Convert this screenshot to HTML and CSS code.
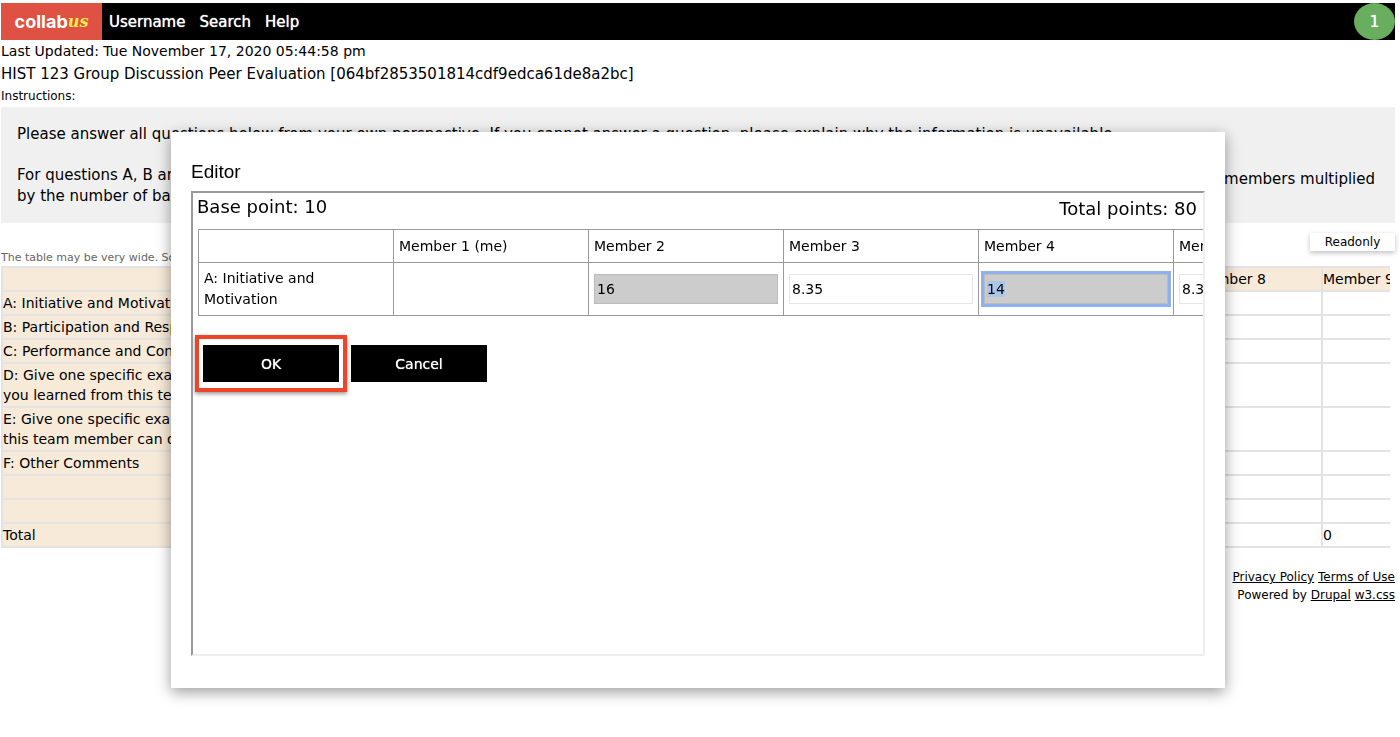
FILE: index.html
```
<!DOCTYPE html>
<html lang="en">
<head>
<meta charset="utf-8">
<title>HIST 123 Group Discussion Peer Evaluation</title>
<link rel="stylesheet" href="styles.css">
</head>
<body>
<header class="navbar">
  <a class="logo" href="#"><span class="logo-main">collab</span><span class="logo-script">us</span></a>
  <nav class="nav-links">
    <a href="#">Username</a>
    <a href="#">Search</a>
    <a href="#">Help</a>
  </nav>
  <a class="counter" href="#">1</a>
</header>

<main>
  <p class="updated">Last Updated: Tue November 17, 2020 05:44:58 pm</p>
  <h1 class="title">HIST 123 Group Discussion Peer Evaluation [064bf2853501814cdf9edca61de8a2bc]</h1>
  <p class="label">Instructions:</p>
  <section class="instructions">
    <p>Please answer all questions below from your own perspective. If you cannot answer a question, please explain why the information is unavailable.</p>
    <div class="paragraph">
      <p class="split"><span>For questions A, B and</span><span class="lowered">members multiplied</span></p>
      <p>by the number of base</p>
    </div>
  </section>

  <div class="toolbar">
    <p class="hint">The table may be very wide. Scroll</p>
    <button class="readonly" type="button">Readonly</button>
  </div>

  <div class="table-scroll">
    <table class="grid">
      <colgroup><col class="col-question"><col span="9" class="col-member"></colgroup>
      <thead>
        <tr><th></th><th></th><th></th><th></th><th></th><th></th><th></th><th></th><th>Member 8</th><th>Member 9</th></tr>
      </thead>
      <tbody>
        <tr><th>A: Initiative and Motivation</th><td></td><td></td><td></td><td></td><td></td><td></td><td></td><td></td><td></td></tr>
        <tr><th>B: Participation and Responsibility</th><td></td><td></td><td></td><td></td><td></td><td></td><td></td><td></td><td></td></tr>
        <tr><th>C: Performance and Contribution</th><td></td><td></td><td></td><td></td><td></td><td></td><td></td><td></td><td></td></tr>
        <tr><th>D: Give one specific example<br>you learned from this team</th><td></td><td></td><td></td><td></td><td></td><td></td><td></td><td></td><td></td></tr>
        <tr><th>E: Give one specific example<br>this team member can do</th><td></td><td></td><td></td><td></td><td></td><td></td><td></td><td></td><td></td></tr>
        <tr><th>F: Other Comments</th><td></td><td></td><td></td><td></td><td></td><td></td><td></td><td></td><td></td></tr>
        <tr><th></th><td></td><td></td><td></td><td></td><td></td><td></td><td></td><td></td><td></td></tr>
        <tr><th></th><td></td><td></td><td></td><td></td><td></td><td></td><td></td><td></td><td></td></tr>
        <tr><th>Total</th><td></td><td></td><td></td><td></td><td></td><td></td><td></td><td></td><td>0</td></tr>
      </tbody>
    </table>
  </div>
</main>

<footer class="footer">
  <p><a href="#">Privacy Policy</a> <a href="#">Terms of Use</a></p>
  <p>Powered by <a href="#">Drupal</a> <a href="#">w3.css</a></p>
</footer>

<div class="overlay">
  <div class="modal" role="dialog" aria-labelledby="editor-title">
    <h2 class="modal-title" id="editor-title">Editor</h2>
    <div class="frame">
      <div class="points"><span>Base point: 10</span><span class="total">Total points: 80</span></div>
      <table class="editor">
        <thead>
          <tr><th></th><th>Member 1 (me)</th><th>Member 2</th><th>Member 3</th><th>Member 4</th><th>Member 5</th></tr>
        </thead>
        <tbody>
          <tr>
            <th>A: Initiative and Motivation</th>
            <td></td>
            <td><input class="score changed" type="text" aria-label="Member 2" value="16"></td>
            <td><input class="score" type="text" aria-label="Member 3" value="8.35"></td>
            <td><input class="score changed active" id="active-score" type="text" aria-label="Member 4" value="14"></td>
            <td><input class="score" type="text" aria-label="Member 5" value="8.35"></td>
          </tr>
        </tbody>
      </table>
      <div class="actions">
        <span class="callout"><button class="action" type="button">OK</button></span>
        <button class="action" type="button">Cancel</button>
      </div>
    </div>
  </div>
</div>
<script src="editor.js"></script>
</body>
</html>
```
FILE: styles.css
```
* { box-sizing: border-box; }
body {
  margin: 0;
  padding: 3px 5px 0 1px;
  background: #fff;
  color: #000;
  font: 14px/20px "DejaVu Sans", Verdana, sans-serif;
}
p, h1, h2 { margin: 0; font-weight: 400; }
a { color: inherit; }
button, input { font: inherit; color: inherit; }

.navbar { display: flex; align-items: stretch; height: 37px; background: #000; color: #fff; font-size: 15px; }
.navbar a { display: flex; align-items: center; text-decoration: none; }
.logo { width: 101px; justify-content: center; background: #de5143; }
.logo-main { font: 700 18px "Inter", sans-serif; }
.logo-script { color: #ffe94d; font: italic 700 16px "DejaVu Serif", serif; }
.nav-links { display: flex; gap: 14px; padding-left: 7px; text-shadow: 0 0 1px #fff; }
.counter { width: 41px; margin-left: auto; justify-content: center; border-radius: 50%; background: #69ad5e; text-shadow: 0 0 1px #fff; }

.updated { line-height: 22px; }
.title { font-size: 15px; line-height: 24px; }
.label { font-size: 12px; line-height: 21px; }
.instructions { padding: 17px 16px 16px; background: #f0f0f0; font-size: 15px; line-height: 21px; }
.paragraph { padding-top: 20px; }
.split { display: flex; justify-content: space-between; padding-right: 4px; }
.lowered { padding-top: 4px; height: 21px; }

.toolbar { display: flex; justify-content: space-between; align-items: flex-end; padding-top: 10px; }
.hint { color: #666; font-size: 11px; line-height: 16px; }
.readonly { width: 85px; height: 18px; margin-bottom: 15px; padding: 0; border: 0; background: #fff; font-size: 12px; line-height: 18px; box-shadow: 0 2px 5px rgba(0,0,0,.25); }

.table-scroll { margin-right: 5px; overflow: hidden; }
.grid { width: 1448px; table-layout: fixed; border-collapse: collapse; }
.col-question { width: 296px; }
.col-member { width: 128px; }
.grid th, .grid td { height: 24px; padding: 1px 0; border: 2px solid #e3e3e3; text-align: left; font-weight: 400; }
.grid th { background: #f7ead9; }

.footer { padding-top: 20px; text-align: right; font-size: 12px; line-height: 18px; }

.overlay { position: fixed; inset: 0; display: flex; justify-content: center; align-items: flex-start; padding: 132px 4px 0 0; }
.modal { width: 75.5%; padding: 29px 20px 32px; background: #fff; box-shadow: 0 4px 14px rgba(0,0,0,.4); }
.modal-title { padding-bottom: 8px; font: 19px/22px "Liberation Sans", Arial, sans-serif; }
.frame { height: 465px; overflow: hidden; border: 2px solid; border-color: #999 #eee #eee #999; padding: 4px; }
.points { display: flex; justify-content: space-between; font-size: 18px; line-height: 20px; padding: 0 2px 0 0; }
.total { padding-top: 2px; }
.editor { width: 1171px; margin: 10px 0 0 1px; table-layout: fixed; border-collapse: collapse; }
.editor th, .editor td { height: 33px; padding: 5px; border: 1px solid #999; text-align: left; font-weight: 400; line-height: 21px; }
.score { display: block; width: 100%; height: 30px; padding: 2px; border: 1px solid #e5e5e5; background: #fff; border-radius: 0; outline: 0; }
.score.changed { background: #ccc; border-color: #bbb; }
.score.active { box-shadow: 0 0 0 3px #8fb1f0; }
.score::selection { background: #a8c7ea; color: #000; }
.actions { display: flex; align-items: center; gap: 4px; padding-top: 19px; margin-left: -2px; }
.callout { display: flex; padding: 6px 4px; border: 4px solid #ee4428; box-shadow: 0 2px 4px rgba(0,0,0,.4); }
.action { width: 136px; height: 37px; border: 0; background: #000; color: #fff; text-shadow: 0 0 1px #fff; }
```
FILE: editor.js
```
const score = document.getElementById("active-score");
score.focus();
score.select();
```
